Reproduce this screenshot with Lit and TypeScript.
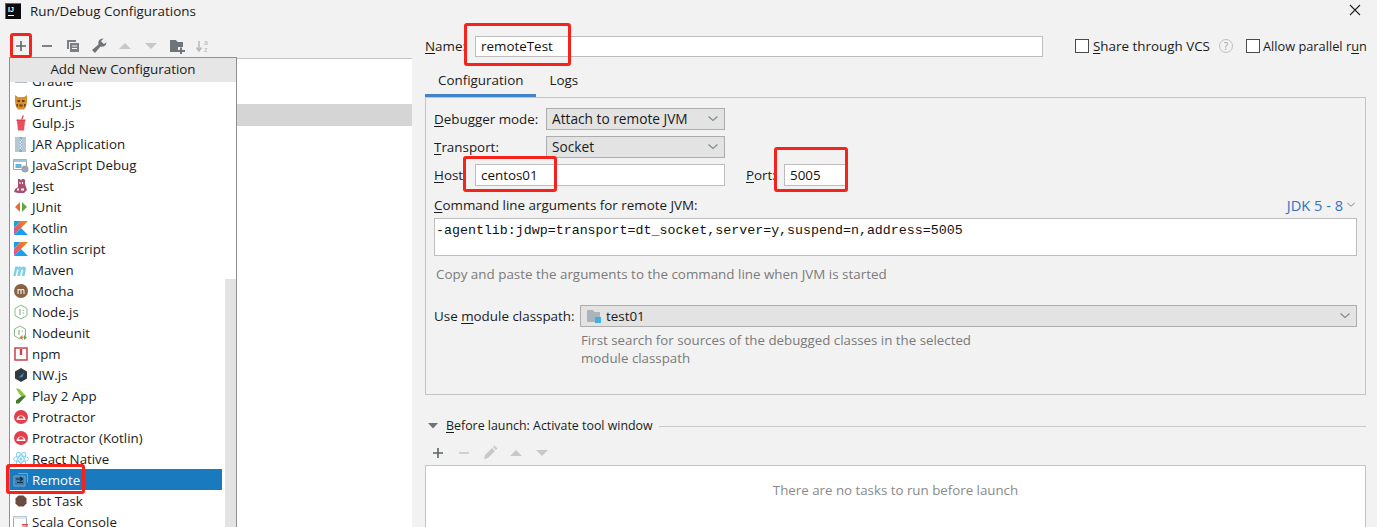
import { LitElement, html, css, svg } from 'lit';
import { customElement } from 'lit/decorators.js';

const icons: Record<string, unknown> = {
  gradle: svg`<path d="M2 5h12v5H2z" fill="#b4bcc4"/>`,
  grunt: svg`<path d="M2 1l3 2h6l3-2v7l-1 5-2 2.500H5L3 13 2 8z" fill="#d9902f"/><path d="M4.500 6h2.500v2H4.500zM9 6h2.500v2H9zM6.500 10.500h3v2h-3zM3.500 10h1.500v2.500H3.500zM11 10h1.500v2.500H11z" fill="#6a3d1a"/>`,
  gulp: svg`<path d="M4 6h8l-1 9.500H5z" fill="#e8505b"/><path d="M3.500 4.500h9V6h-9z" fill="#d9434e"/><path d="M8 4.500L9.500 0.500h1.500L9.500 4.500z" fill="#e8505b"/>`,
  jar: svg`<path d="M2 1h11v15H2z" fill="#b9c6cf"/><path d="M6.500 1h2.500v15H6.500z" fill="#6fb3d6"/><path d="M6.500 3L9 4.500 6.500 6 9 7.500 6.500 9 9 10.500 6.500 12 9 13.500" stroke="#fff" stroke-width=".7" fill="none"/>`,
  jsdebug: svg`<path d="M.500 2.500h13v10h-13z" fill="#fff" stroke="#9aa7b0"/><path d="M.500 2.500h13v2.500h-13z" fill="#9fc4dc"/><path d="M2.500 7h6v4h-6z" fill="#6fb3d6"/><circle cx="12" cy="12" r="3.500" fill="#9aa7b0"/>`,
  jest: svg`<path d="M5 1h2l1 1.500L9 1h2l1 1v4l2 6-3 3H5l-4-1 1-3 3-2z" fill="#a94f6f"/><path d="M6.500 4h1v2h-1zM9 4h1v2H9zM4 10.500h2v2H4zM8 10.500h3v2H8z" fill="#fff"/>`,
  junit: svg`<path d="M7 3v10L2 8z" fill="#e96c36"/><path d="M9 3v10l5-5z" fill="#5fa83a"/>`,
  kotlin: svg`<defs><linearGradient id="kg" x1="0" y1="1" x2="1" y2="0"><stop offset="0" stop-color="#c757bc"/><stop offset=".5" stop-color="#e8664a"/><stop offset="1" stop-color="#f88909"/></linearGradient></defs><path d="M1 1h6.500L1 8z" fill="#18a0ea"/><path d="M7.500 1H15L1 15V8z" fill="url(#kg)"/><path d="M8 8l7 7H1z" fill="#18a0ea"/>`,
  maven: svg`<path d="M2.200 4.500h3l-.3 1c1-1.200 2.500-1.300 3.200 0 1-1.300 3.500-1.600 4.500-.2.500.7.400 1.500.200 2.400L11.500 14h-2.800l1.200-5.500c.3-1.400-1.300-1.400-1.700 0L7 14H4.300l1.200-5.700c.2-1.200-1.300-1.300-1.600 0L2.700 14H.3z" fill="#7fd0ea"/>`,
  mocha: svg`<circle cx="8" cy="8" r="7" fill="#8a6343"/><path d="M4.500 11V6h1v.5c.7-.8 1.700-.8 2.500 0 .8-.8 3.500-1 3.500 1.500v3h-1V8c0-1.300-2-1.300-2 0v3h-1V8c0-1.300-2-1.300-2 0v3z" fill="#fff"/>`,
  node: svg`<path d="M8 1l6 3.500v7L8 15l-6-3.500v-7z" fill="#fff" stroke="#8ab88a"/><path d="M7 5v6M9.500 6.500H11M9.500 9H11" stroke="#8ab88a" stroke-width="1.200"/>`,
  nodeunit: svg`<path d="M7 1l5.500 3v7L7 14l-5.500-3V4z" fill="#fff" stroke="#8ab88a"/><path d="M6 5v5M8.500 6h1.500" stroke="#8ab88a" stroke-width="1.200"/><path d="M9.500 10v5L6.500 12.500z" fill="#e96c36"/><path d="M11 10v5l3-2.500z" fill="#5fa83a"/>`,
  npm: svg`<path d="M2 2h12v12H2z" fill="#fff" stroke="#c9434f" stroke-width="1.500"/><path d="M6.800 3h2.400v6H6.800z" fill="#c9434f"/>`,
  nw: svg`<path d="M8 1l6 3.500v7L8 15l-6-3.500v-7z" fill="#35393e"/><path d="M5.500 10.500L11 5.500 9.500 10z" fill="#3f8fd2"/>`,
  play: svg`<path d="M3 0.500l3.500.5L13 8l-3 2.500L6 5.500z" fill="#8cc63f"/><path d="M13 8L6 15.500 3 15.500l0-3 5-4z" fill="#3f7a2d"/>`,
  protractor: svg`<circle cx="8" cy="8" r="7" fill="#e2404b"/><path d="M3.500 11a4.500 4.500 0 0 1 9 0z" fill="#fff"/><path d="M5.500 9.500a2.500 2.500 0 0 1 5 0z" fill="#e2404b"/>`,
  react: svg`<g fill="none" stroke="#7fd3ec" stroke-width=".9"><ellipse cx="8" cy="8" rx="7.500" ry="3"/><ellipse cx="8" cy="8" rx="7.500" ry="3" transform="rotate(60 8 8)"/><ellipse cx="8" cy="8" rx="7.500" ry="3" transform="rotate(120 8 8)"/></g><circle cx="8" cy="8" r="1.500" fill="#7fd3ec"/>`,
  remote: svg`<path d="M5 1.500h9.500v9" fill="none" stroke="#7aa7c7"/><path d="M1 4h11v10H1z" fill="#3c7eae" stroke="#7aa7c7"/><path d="M3 7h6M7 5l2.500 2L7 9M10 10.500H4" fill="none" stroke="#0e2a40" stroke-width="1.200"/>`,
  sbt: svg`<path d="M5.500 2.500h5L13.500 5.500v5L10.500 13.500h-5L2.500 10.500v-5z" fill="#6b4a40"/>`,
  scala: svg`<path d="M.500 2.500h13v11h-13z" fill="#fff" stroke="#9aa7b0"/><path d="M.500 2.500h13v2.500h-13z" fill="#dfe5e9"/><path d="M9 10h6v1.500H9zM9 12.500h6V14H9z" fill="#e2404b"/>`,
};

const items: [string, string][] = [
  ['gradle', 'Gradle'], ['grunt', 'Grunt.js'], ['gulp', 'Gulp.js'], ['jar', 'JAR Application'],
  ['jsdebug', 'JavaScript Debug'], ['jest', 'Jest'], ['junit', 'JUnit'], ['kotlin', 'Kotlin'],
  ['kotlin', 'Kotlin script'], ['maven', 'Maven'], ['mocha', 'Mocha'], ['node', 'Node.js'],
  ['nodeunit', 'Nodeunit'], ['npm', 'npm'], ['nw', 'NW.js'], ['play', 'Play 2 App'],
  ['protractor', 'Protractor'], ['protractor', 'Protractor (Kotlin)'], ['react', 'React Native'],
  ['remote', 'Remote'], ['sbt', 'sbt Task'], ['scala', 'Scala Console'],
];

const chevron = html`<svg class="chev" width="12" height="8" viewBox="0 0 12 8"><path d="M1.500 1.500L6 5.500l4.500-4" fill="none" stroke="#7f8b91" stroke-width="1.200"/></svg>`;

@customElement('app-root')
export class AppRoot extends LitElement {
  static styles = css`
    :host {
      display: block;
      position: relative;
      width: 1377px;
      height: 527px;
      overflow: hidden;
      background: #f2f2f2;
      color: #1a1a1a;
      font: 13.4px/18px "Open Sans", "Noto Sans", sans-serif;
    }
    u { text-underline-offset: 2px; }
    .titlebar {
      display: flex;
      align-items: center;
      height: 22px;
      padding: 0 21px 0 5px;
      gap: 9px;
    }
    .titlebar .title { flex: 1; }
    .body {
      display: grid;
      grid-template-columns: 413px minmax(0, 1fr);
      height: 505px;
    }
    .left { padding-top: 11px; display: flex; flex-direction: column; }
    .toolbar { display: flex; align-items: center; height: 25px; padding-left: 13px; gap: 10px; }
    .tree {
      flex: 1;
      background: #fff;
      margin-left: 9px;
      margin-right: 1px;
      border-top: 1px solid #c4c4c4;
      padding-top: 45px;
    }
    .tree .sel { height: 22px; background: #d5d5d5; }
    .right { padding: 14px 11px 0 12px; display: flex; flex-direction: column; min-width: 0; }
    .namerow { display: flex; align-items: center; height: 20px; }
    .namerow .lbl { width: 50px; flex: none; }
    input {
      box-sizing: border-box;
      background: #fff;
      border: 1px solid #bdbdbd;
      font: inherit;
      color: #111;
      padding: 0 5px;
      outline: none;
    }
    .name { width: 568px; height: 21px; flex: none; }
    .check { display: flex; align-items: center; gap: 4px; white-space: nowrap; flex: none; }
    .box { width: 12px; height: 12px; border: 1px solid #4a4a4a; background: #fff; }
    .share { margin-left: 32px; }
    .help { margin-left: 8px; margin-right: 12px; flex: none; }
    .parallel { font-size: 12.8px; gap: 3px; }
    .tabs { display: flex; height: 29px; margin-top: 12px; }
    .tab { padding: 2px 13px 0; line-height: 20px; }
    .tab.on { border-bottom: 3px solid #4083c9; height: 24px; padding-top: 2px; }
    .panel {
      box-sizing: border-box;
      height: 298px;
      border: 1px solid #c4c4c4;
      padding: 10px 8px 0 8px;
    }
    .row { display: flex; align-items: center; height: 22px; margin-bottom: 6px; }
    .row .lbl { width: 112px; }
    .select {
      box-sizing: border-box;
      display: flex;
      align-items: center;
      justify-content: space-between;
      background: #e3e3e3;
      border: 1px solid #adadad;
      height: 22px;
      padding: 0 5px;
    }
    .select .text { display: flex; align-items: center; gap: 4px; }
    .w178 { width: 179px; font-size: 13.7px; }
    .hostrow .lbl { width: 41px; }
    .host { width: 250px; height: 22px; }
    .portlbl { margin-left: 21px; width: 38px; }
    .port { width: 62px; height: 22px; }
    .cmdhead { display: flex; justify-content: space-between; margin-top: 8px; height: 22px; align-items: center; margin-bottom: 2px; }
    .jdk { color: #2f73c4; display: flex; align-items: center; gap: 3px; margin-right: 1px; font-size: 14.6px; }
    .jdk .chev { width: 10px; }
    .args {
      box-sizing: border-box;
      height: 38px;
      background: #fff;
      border: 1px solid #bdbdbd;
      font: 13.3px/24px "Liberation Mono", monospace;
      padding: 0 1px;
      color: #111;
    }
    .hint { color: #7a7a7a; }
    .copy { margin: 9px 2px 0; }
    .modrow { display: flex; align-items: center; height: 22px; margin-top: 22px; }
    .modrow .lbl { width: 146px; }
    .modrow .select { flex: 1; }
    .modhint { margin: 4px 0 0 147px; font-size: 13.3px; }
    .before { display: flex; align-items: center; height: 20px; margin-top: 21px; padding-left: 3px; gap: 6px; font-size: 12.4px; }
    .before .rule { flex: 1; height: 1px; background: #c9c9c9; }
    .btoolbar { display: flex; align-items: center; height: 22px; margin-top: 6px; padding-left: 5px; gap: 10px; }
    .tasks {
      flex: 1;
      background: #fff;
      border: 1px solid #c4c4c4;
      border-bottom: none;
      margin-top: 1px;
      display: flex;
      justify-content: center;
      padding-top: 15px;
      color: #8a8a8a;
      font-size: 13.3px;
    }
    .popup {
      position: absolute;
      left: 9px;
      top: 57px;
      width: 228px;
      height: 470px;
      box-sizing: border-box;
      border: 1px solid #8f8f8f;
      border-bottom: none;
      background: #fff;
      overflow: hidden;
      font-size: 13.3px;
    }
    .pophead {
      position: relative;
      z-index: 1;
      height: 24px;
      background: #e6e6e6;
      text-align: center;
      line-height: 22px;
      font-size: 13.4px;
    }
    .scroll { position: absolute; right: 0; top: 221px; bottom: 0; width: 11px; background: #e3e3e3; }
    .list { margin-top: -12px; margin-right: 14px; }
    .item { display: flex; align-items: center; height: 21px; padding-left: 3px; gap: 3px; white-space: nowrap; }
    .item.on { background: #1a7abf; color: #fff; }
    .mark {
      position: absolute;
      box-sizing: border-box;
      border: 3px solid #f5231b;
      border-radius: 3px;
      z-index: 3;
    }
    .close { position: absolute; left: 1349px; top: 4px; }
  `;

  render() {
    return html`
      <div class="titlebar">
        <svg width="16" height="16" viewBox="0 0 16 16"><path d="M0 0h16v16H0z" fill="#0b0b0f"/><path d="M0 0h16v1H0zM0 0h1v16H0z" fill="#2b6fc4"/><text x="3" y="9" font-size="7" font-weight="700" fill="#fff" font-family="Liberation Sans">IJ</text><path d="M3 12h6v1H3z" fill="#fff"/></svg>
        <span class="title">Run/Debug Configurations</span>
      </div>
      <svg class="close" width="12" height="12" viewBox="0 0 12 12"><path d="M1 1l10 10M11 1L1 11" stroke="#222" stroke-width="1.100"/></svg>
      <div class="body">
        <div class="left">
          <div class="toolbar">
            <svg width="16" height="16" viewBox="0 0 16 16"><path d="M7.200 3h1.600v4.200H13v1.600H8.800V13H7.200V8.800H3V7.200h4.200z" fill="#5e6468"/></svg>
            <svg width="16" height="16" viewBox="0 0 16 16"><path d="M3 7.200h10v1.600H3z" fill="#5e6468"/></svg>
            <svg width="16" height="16" viewBox="0 0 16 16"><path d="M2 2h9v2H4v7H2z" fill="#7a8185"/><path d="M5 5h9v9H5z" fill="#7a8185"/><path d="M7 7.500h5v1H7zM7 10h5v1H7z" fill="#f2f2f2"/></svg>
            <svg width="16" height="16" viewBox="0 0 16 16"><path d="M15.500 4.500a4.500 4.500 0 0 1-6 4L4 15 1 12l6.500-5.500A4.500 4.500 0 0 1 12.500 .5L10 3.200 12.800 6z" fill="#6e7579"/></svg>
            <svg width="16" height="16" viewBox="0 0 16 16"><path d="M2 11l6-6 6 6z" fill="#c8c8c8"/></svg>
            <svg width="16" height="16" viewBox="0 0 16 16"><path d="M2 5h12l-6 6z" fill="#c8c8c8"/></svg>
            <svg width="16" height="16" viewBox="0 0 16 16"><path d="M1 2h6l1.500 2H14v5H9v5H1z" fill="#6e7579"/><path d="M11 9.500h2v2.500h3v2h-3v2h-2v-2H9v-2h2z" fill="#6e7579"/></svg>
            <svg width="16" height="16" viewBox="0 0 16 16"><path d="M4 3v9M1.500 9.500L4 13l2.500-3.500" fill="none" stroke="#b5b5b5" stroke-width="1.400"/><text x="9" y="7" font-size="7" fill="#b5b5b5" font-family="Liberation Sans">a</text><text x="9" y="14" font-size="7" fill="#b5b5b5" font-family="Liberation Sans">z</text></svg>
          </div>
          <div class="tree"><div class="sel"></div></div>
        </div>
        <div class="right">
          <div class="namerow">
            <span class="lbl"><u>N</u>ame:</span>
            <input class="name" value="remoteTest" />
            <label class="check share"><span class="box"></span><span><u>S</u>hare through VCS</span></label>
            <svg class="help" width="16" height="16" viewBox="0 0 16 16"><circle cx="8" cy="8" r="6.500" fill="none" stroke="#c0c0c0"/><text x="8" y="11.500" font-size="10" text-anchor="middle" fill="#9a9a9a" font-family="Open Sans">?</text></svg>
            <label class="check parallel"><span class="box"></span><span>Allow parallel r<u>u</u>n</span></label>
          </div>
          <div class="tabs">
            <div class="tab on">Configuration</div>
            <div class="tab">Logs</div>
          </div>
          <div class="panel">
            <div class="row"><span class="lbl"><u>D</u>ebugger mode:</span><div class="select w178"><span>Attach to remote JVM</span>${chevron}</div></div>
            <div class="row"><span class="lbl"><u>T</u>ransport:</span><div class="select w178"><span>Socket</span>${chevron}</div></div>
            <div class="row hostrow">
              <span class="lbl"><u>H</u>ost:</span><input class="host" value="centos01" />
              <span class="portlbl"><u>P</u>ort:</span><input class="port" value="5005" />
            </div>
            <div class="cmdhead"><span><u>C</u>ommand line arguments for remote JVM:</span><span class="jdk">JDK 5 - 8 ${chevron}</span></div>
            <div class="args">-agentlib:jdwp=transport=dt_socket,server=y,suspend=n,address=5005</div>
            <div class="hint copy">Copy and paste the arguments to the command line when JVM is started</div>
            <div class="modrow">
              <span class="lbl">Use <u>m</u>odule classpath:</span>
              <div class="select">
                <span class="text">
                  <svg width="16" height="16" viewBox="0 0 16 16"><path d="M1 2h6l1.500 2H14v5H9v5H1z" fill="#aab4bb"/><path d="M9 9h6v6H9z" fill="#3fb0e6"/></svg>
                  test01
                </span>${chevron}
              </div>
            </div>
            <div class="hint modhint">First search for sources of the debugged classes in the selected<br />module classpath</div>
          </div>
          <div class="before">
            <svg width="12" height="8" viewBox="0 0 12 8"><path d="M0 1h10L5 6.500z" fill="#6e7579"/></svg>
            <span><u>B</u>efore launch: Activate tool window</span>
            <span class="rule"></span>
          </div>
          <div class="btoolbar">
            <svg width="16" height="16" viewBox="0 0 16 16"><path d="M7.200 3h1.600v4.200H13v1.600H8.800V13H7.200V8.800H3V7.200h4.200z" fill="#5e6468"/></svg>
            <svg width="16" height="16" viewBox="0 0 16 16"><path d="M3 7.200h10v1.600H3z" fill="#c8c8c8"/></svg>
            <svg width="16" height="16" viewBox="0 0 16 16"><path d="M2 14l1-4 7-7 3 3-7 7zM11 2l1.500-1.500 3 3L14 5z" fill="#c8c8c8"/></svg>
            <svg width="16" height="16" viewBox="0 0 16 16"><path d="M2 11l6-6 6 6z" fill="#c8c8c8"/></svg>
            <svg width="16" height="16" viewBox="0 0 16 16"><path d="M2 5h12l-6 6z" fill="#c8c8c8"/></svg>
          </div>
          <div class="tasks">There are no tasks to run before launch</div>
        </div>
      </div>
      <div class="popup">
        <div class="pophead">Add New Configuration</div>
        <div class="scroll"></div>
        <div class="list">
          ${items.map(([icon, label]) => html`
            <div class="item ${label === 'Remote' ? 'on' : ''}">
              <svg width="16" height="16" viewBox="0 0 16 16">${icons[icon]}</svg>
              <span>${label}</span>
            </div>`)}
        </div>
      </div>
      <div class="mark" style="left:10px;top:33px;width:22px;height:25px"></div>
      <div class="mark" style="left:464px;top:23px;width:107px;height:43px"></div>
      <div class="mark" style="left:463px;top:156px;width:94px;height:36px"></div>
      <div class="mark" style="left:774px;top:147px;width:74px;height:45px"></div>
      <div class="mark" style="left:6px;top:464px;width:79px;height:30px"></div>
    `;
  }
}
